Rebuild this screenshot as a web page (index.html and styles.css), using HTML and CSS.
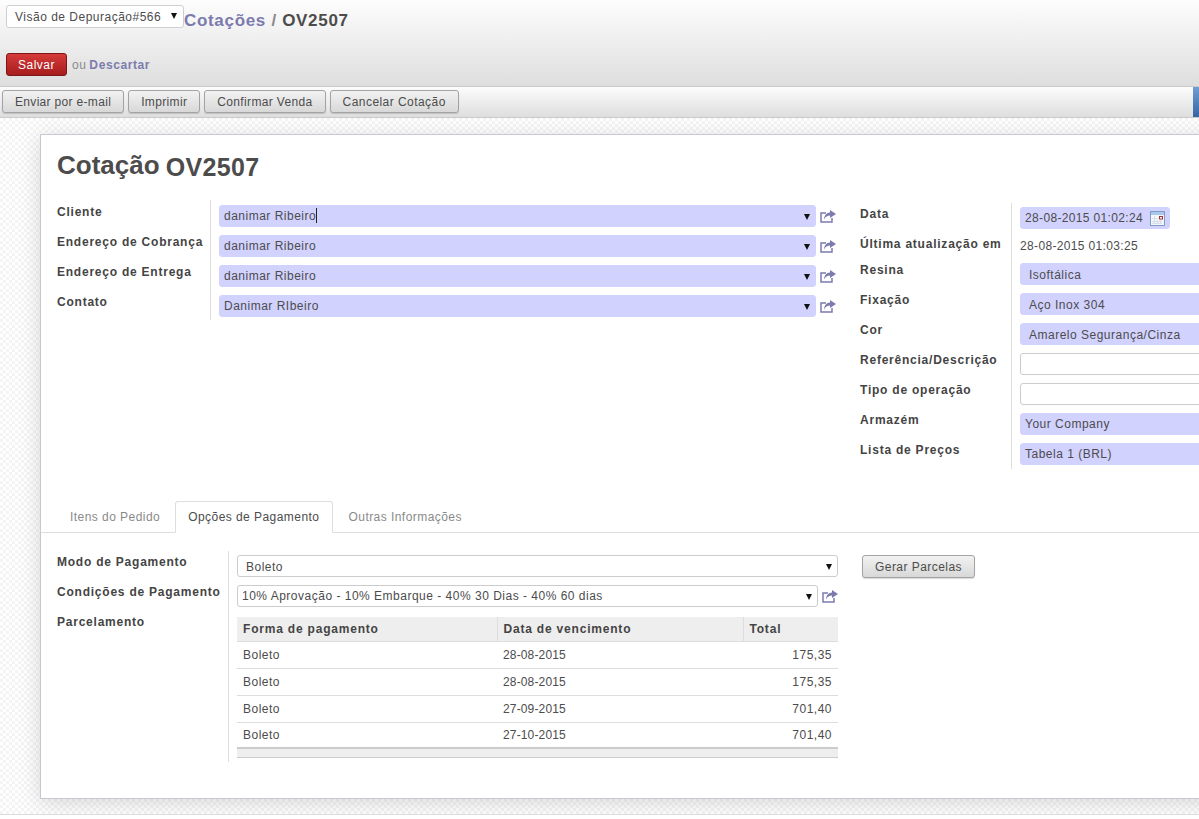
FILE: index.html
```html
<!DOCTYPE html>
<html>
<head>
  <meta charset="utf-8">
  <title>Cotações / OV2507</title>
  <link rel="stylesheet" href="styles.css">
</head>
<body>
  <div class="header">
    <div class="title-row">
      <div class="debug-select">Visão de Depuração#566<span class="caret"></span></div>
      <div class="breadcrumb"><a>Cotações</a> <span class="sep">/</span> <b>OV2507</b></div>
    </div>
    <div class="save-row">
      <button class="btn-save">Salvar</button>
      <span class="or">ou</span>
      <a class="discard">Descartar</a>
    </div>
  </div>

  <div class="toolbar">
    <button class="btn btn-mail">Enviar por e-mail</button>
    <button class="btn btn-print">Imprimir</button>
    <button class="btn btn-confirm">Confirmar Venda</button>
    <button class="btn">Cancelar Cotação</button>
    <div class="toolbar-edge"></div>
  </div>

  <div class="main">
    <div class="sheet">
      <h1 class="doc-title">Cotação <span>OV2507</span></h1>

      <div class="groups">
        <table class="group group-left">
          <tr>
            <td class="label">Cliente</td>
            <td class="value"><div class="line"><div class="field req grow">danimar Ribeiro<i class="text-cursor"></i><span class="caret"></span></div><svg class="share" viewBox="0 0 16 13"><use href="#share"/></svg></div></td>
          </tr>
          <tr>
            <td class="label">Endereço de Cobrança</td>
            <td class="value"><div class="line"><div class="field req grow">danimar Ribeiro<span class="caret"></span></div><svg class="share" viewBox="0 0 16 13"><use href="#share"/></svg></div></td>
          </tr>
          <tr>
            <td class="label">Endereço de Entrega</td>
            <td class="value"><div class="line"><div class="field req grow">danimar Ribeiro<span class="caret"></span></div><svg class="share" viewBox="0 0 16 13"><use href="#share"/></svg></div></td>
          </tr>
          <tr>
            <td class="label">Contato</td>
            <td class="value"><div class="line"><div class="field req grow">Danimar RIbeiro<span class="caret"></span></div><svg class="share" viewBox="0 0 16 13"><use href="#share"/></svg></div></td>
          </tr>
        </table>

        <table class="group group-right">
          <tr class="row-date">
            <td class="label">Data</td>
            <td class="value">
              <div class="field req date">28-08-2015 01:02:24
                <svg class="cal" viewBox="0 0 15 15">
                  <rect x="0.5" y="0.5" width="14" height="14" fill="#f3f6fa" stroke="#7f9cc4"/>
                  <rect x="1" y="1" width="13" height="3" fill="#a9c8ee"/>
                  <path d="M2 7.500h6M2 10.500h10M2 12.500h10M4.500 5v8M7.500 9v4M10.500 9v4" stroke="#d9dfe8" fill="none"/>
                  <rect x="9.500" y="5.500" width="3" height="2.500" fill="#fff" stroke="#a33333"/>
                </svg>
              </div>
            </td>
          </tr>
          <tr class="row-text">
            <td class="label">Última atualização em</td>
            <td class="value plain">28-08-2015 01:03:25</td>
          </tr>
          <tr>
            <td class="label">Resina</td>
            <td class="value"><div class="field req wide indent">Isoftálica</div></td>
          </tr>
          <tr>
            <td class="label">Fixação</td>
            <td class="value"><div class="field req wide indent">Aço Inox 304</div></td>
          </tr>
          <tr>
            <td class="label">Cor</td>
            <td class="value"><div class="field req wide indent">Amarelo Segurança/Cinza</div></td>
          </tr>
          <tr>
            <td class="label">Referência/Descrição</td>
            <td class="value"><div class="field wide"></div></td>
          </tr>
          <tr>
            <td class="label">Tipo de operação</td>
            <td class="value"><div class="field wide"></div></td>
          </tr>
          <tr>
            <td class="label">Armazém</td>
            <td class="value"><div class="field req wide">Your Company</div></td>
          </tr>
          <tr>
            <td class="label">Lista de Preços</td>
            <td class="value"><div class="field req wide">Tabela 1 (BRL)</div></td>
          </tr>
        </table>
      </div>

      <ul class="tabs">
        <li>Itens do Pedido</li>
        <li class="active">Opções de Pagamento</li>
        <li>Outras Informações</li>
      </ul>

      <div class="tab-body">
        <table class="group group-pay">
          <tr>
            <td class="label">Modo de Pagamento</td>
            <td class="value"><div class="field indent">Boleto<span class="caret"></span></div></td>
          </tr>
          <tr>
            <td class="label">Condições de Pagamento</td>
            <td class="value"><div class="line"><div class="field grow">10% Aprovação - 10% Embarque - 40% 30 Dias - 40% 60 dias<span class="caret"></span></div><svg class="share" viewBox="0 0 16 13"><use href="#share"/></svg></div></td>
          </tr>
          <tr>
            <td class="label">Parcelamento</td>
            <td class="value">
              <table class="list">
                <thead>
                  <tr><th class="col-a">Forma de pagamento</th><th class="col-b">Data de vencimento</th><th>Total</th></tr>
                </thead>
                <tbody>
                  <tr><td>Boleto</td><td class="date-cell">28-08-2015</td><td class="num">175,35</td></tr>
                  <tr><td>Boleto</td><td class="date-cell">28-08-2015</td><td class="num">175,35</td></tr>
                  <tr><td>Boleto</td><td class="date-cell">27-09-2015</td><td class="num">701,40</td></tr>
                  <tr class="last"><td>Boleto</td><td class="date-cell">27-10-2015</td><td class="num">701,40</td></tr>
                </tbody>
                <tfoot>
                  <tr><td colspan="3"></td></tr>
                </tfoot>
              </table>
            </td>
          </tr>
        </table>
        <button class="btn btn-gen">Gerar Parcelas</button>
      </div>
    </div>
  </div>

  <svg class="defs" width="0" height="0">
    <symbol id="share" viewBox="0 0 16 13">
      <path d="M6 3H1v9h11V8" fill="none" stroke="#7c7bad" stroke-width="1.500"/>
      <path d="M10 0l6 4-6 4V5.500C7.500 5.500 5.500 6.500 4 9.500 4.300 5.500 6.500 2.500 10 2.500z" fill="#7c7bad"/>
    </symbol>
  </svg>
</body>
</html>
```
FILE: styles.css
```css
html, body { margin: 0; padding: 0; height: 819px; overflow: hidden; }
body {
  font-family: "Liberation Sans", Arial, sans-serif;
  font-size: 12px;
  letter-spacing: 0.5px;
  color: #4c4c4c;
  background: #fff;
}
table { border-collapse: collapse; border-spacing: 0; }
td, th { padding: 0; }
.defs { position: absolute; }

.header {
  height: 87px;
  box-sizing: border-box;
  padding: 5px 6px 0;
  background: linear-gradient(#fdfdfd, #dedede);
  border-bottom: 1px solid #cacaca;
}
.title-row { display: flex; align-items: flex-start; height: 48px; }
.debug-select {
  position: relative;
  width: 178px;
  height: 23px;
  box-sizing: border-box;
  padding: 4px 0 0 8px;
  background: #fff;
  border: 1px solid #cfcfcf;
  border-radius: 3px;
}
.debug-select .caret { right: 6px; top: 7px; }
.breadcrumb {
  font-size: 17px;
  font-weight: bold;
  line-height: 20px;
  margin: 6px 0 0 0;
  color: #4c4c4c;
  letter-spacing: 0.68px;
}
.breadcrumb a { color: #7c7bad; }
.breadcrumb .sep { color: #8a8a8a; }
.save-row { display: flex; align-items: center; height: 23px; }
.btn-save {
  width: 61px;
  height: 23px;
  padding: 0;
  font: inherit;
  letter-spacing: inherit;
  color: #fff;
  background: linear-gradient(#d63a3a, #a61c1c);
  border: 1px solid #7d1717;
  border-radius: 3px;
}
.or { margin-left: 5px; color: #8a8a8a; }
.discard { margin-left: 3px; color: #7c7bad; font-weight: bold; letter-spacing: 0.6px; }

.toolbar {
  position: relative;
  display: flex;
  gap: 4px;
  height: 31px;
  box-sizing: border-box;
  padding: 3px 2px 0;
  background: linear-gradient(#fcfcfc, #dedede);
  border-bottom: 1px solid #cacaca;
}
.toolbar-edge {
  position: absolute;
  right: 0;
  top: 0;
  width: 6px;
  height: 30px;
  background: linear-gradient(#6f9fd4, #3465a4);
}
.btn {
  height: 23px;
  padding: 0 12px;
  font: inherit;
  letter-spacing: 0.45px;
  color: #4c4c4c;
  background: linear-gradient(#f2f2f2, #d8d8d8);
  border: 1px solid #a3a3a3;
  border-radius: 3px;
  box-shadow: 0 1px 1px rgba(0, 0, 0, 0.15);
}
.btn-mail { letter-spacing: 0.32px; }
.btn-print { letter-spacing: 0.35px; }
.btn-confirm { letter-spacing: 0.35px; }

.main {
  height: 697px;
  box-sizing: border-box;
  padding: 16px 0 0 40px;
  overflow: hidden;
  background-color: #fff;
  background-image: repeating-conic-gradient(#f4f4f4 0 25%, #fff 0 50%);
  background-size: 6px 6px;
  border-bottom: 1px solid #dcdcdc;
}
.sheet {
  width: 1240px;
  height: 665px;
  box-sizing: border-box;
  background: #fff;
  border: 1px solid #c8c8d4;
  box-shadow: 0 4px 20px rgba(0, 0, 0, 0.15);
}
.doc-title {
  margin: 13px 0 0 16px;
  font-size: 26px;
  line-height: 34px;
  font-weight: bold;
  letter-spacing: 0;
  color: #4c4c4c;
}
.doc-title span { font-size: 25px; letter-spacing: 0.3px; position: relative; top: 2px; margin-left: -1px; }

.groups { display: flex; align-items: flex-start; margin: 18px 0 0 16px; }
.group { font-size: 12px; border-collapse: separate; table-layout: fixed; flex: none; }
.group td { box-sizing: border-box; height: 30px; vertical-align: top; }
.group td.label {
  font-weight: bold;
  letter-spacing: 0.77px;
  color: #444;
  white-space: nowrap;
  border-right: 1px solid #ddd;
  line-height: 14px;
}
.group td.value { padding-left: 8px; }
.group-left { width: 779px; }
.group-left td.label { width: 154px; padding-top: 5px; }
.group-left td.value { width: 625px; }
.group-right { width: 340px; margin: 3px 0 0 24px; }
.group-right td.label { width: 152px; padding-top: 4px; }
.group-right td.value { width: 188px; padding-top: 4px; }
.group-right .row-text td { height: 26px; }
.group-right .row-text td.value { padding-top: 6px; letter-spacing: 0.35px; }

.line { display: flex; align-items: center; gap: 4px; }
.grow { flex: 1; }
.field {
  position: relative;
  height: 22px;
  line-height: 20px;
  box-sizing: border-box;
  padding-left: 4px;
  white-space: nowrap;
  background: #fff;
  border: 1px solid #ccc;
  border-radius: 3px;
}
.field.req { background: #d2d2ff; border-color: #d2d2ff; }
.field.indent { padding-left: 8px; padding-top: 1px; }
.field.wide { width: 200px; }
.field.date { width: 150px; letter-spacing: 0.35px; }
.caret {
  position: absolute;
  right: 5px;
  top: 8px;
  width: 0;
  height: 0;
  border-left: 3px solid transparent;
  border-right: 3px solid transparent;
  border-top: 6px solid #111;
}
.text-cursor {
  display: inline-block;
  width: 1px;
  height: 15px;
  vertical-align: -3px;
  background: #222;
}
.share { width: 16px; height: 13px; flex: none; }
.cal { position: absolute; right: 4px; top: 3px; width: 15px; height: 15px; }
.group-left td.value, .group-pay td.value { padding-top: 5px; }

.tabs {
  display: flex;
  height: 32px;
  box-sizing: border-box;
  margin: 32px 0 0;
  padding: 0 0 0 16px;
  list-style: none;
  letter-spacing: 0.45px;
  border-bottom: 1px solid #ddd;
}
.tabs li {
  height: 32px;
  box-sizing: border-box;
  padding: 8px 12px 0;
  margin-right: 2px;
  color: #8a8a8a;
  border: 1px solid transparent;
}
.tabs li.active {
  padding-right: 13px;
  color: #4c4c4c;
  background: #fff;
  border-color: #ddd;
  border-bottom-color: #fff;
  border-radius: 3px 3px 0 0;
}

.tab-body { display: flex; align-items: flex-start; margin: 18px 0 0 16px; }
.group-pay { width: 781px; }
.group-pay > tbody > tr > td.label { width: 172px; padding-top: 4px; }
.group-pay > tbody > tr > td.value { width: 609px; padding-top: 4px; padding-bottom: 4px; }
.btn-gen { margin: 4px 0 0 24px; }

.list { width: 601px; margin-top: 2px; }
.list th {
  height: 24px;
  box-sizing: border-box;
  padding: 0 6px;
  text-align: left;
  font-weight: bold;
  letter-spacing: 0.8px;
  background: #eee;
  color: #444;
  border-left: 1px solid #ddd;
  border-bottom: 1px solid #ddd;
}
.list th:first-child { border-left: 0; }
.list .col-a { width: 260px; }
.list .col-b { width: 246px; }
.group .list td { height: 27px; padding: 0 6px; vertical-align: middle; border-bottom: 1px solid #ddd; }
.group .list tr.last td { height: 26px; padding-top: 1px; border-bottom: 0; }
.group .list .date-cell { letter-spacing: 0.15px; }
.group .list td.num { text-align: right; }
.group .list tfoot td { height: 9px; padding: 0; background: #eee; border-top: 2px solid #ccc; border-bottom: 1px solid #ccc; }
```
